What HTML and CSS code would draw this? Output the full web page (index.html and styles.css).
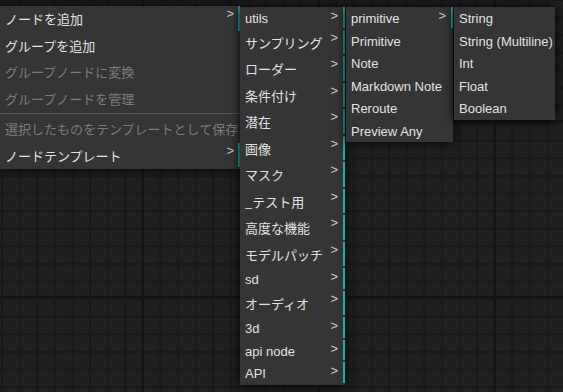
FILE: index.html
```html
<!DOCTYPE html>
<html lang="ja">
<head>
    <meta charset="UTF-8">
    <title>コンテキストメニュー</title>
    <link rel="stylesheet" href="styles.css">
</head>
<body>
    <div class="canvas">
        <div class="menus">
            <!-- メインメニュー -->
            <div class="menu menu-main">
                <div class="entry jp sub"><span>ノードを追加</span><span class="arrow">&gt;</span></div>
                <div class="entry jp">グループを追加</div>
                <div class="entry jp disabled">グループノードに変換</div>
                <div class="entry jp disabled">グループノードを管理</div>
                <div class="separator"></div>
                <div class="entry jp disabled">選択したものをテンプレートとして保存</div>
                <div class="entry jp sub"><span>ノードテンプレート</span><span class="arrow">&gt;</span></div>
            </div>

            <!-- カテゴリ -->
            <div class="menu menu-cat">
                <div class="entry sub"><span>utils</span><span class="arrow">&gt;</span></div>
                <div class="entry jp sub"><span>サンプリング</span><span class="arrow">&gt;</span></div>
                <div class="entry jp sub"><span>ローダー</span><span class="arrow">&gt;</span></div>
                <div class="entry jp sub"><span>条件付け</span><span class="arrow">&gt;</span></div>
                <div class="entry jp sub"><span>潜在</span><span class="arrow">&gt;</span></div>
                <div class="entry jp sub"><span>画像</span><span class="arrow">&gt;</span></div>
                <div class="entry jp sub"><span>マスク</span><span class="arrow">&gt;</span></div>
                <div class="entry jp sub"><span>_テスト用</span><span class="arrow">&gt;</span></div>
                <div class="entry jp sub"><span>高度な機能</span><span class="arrow">&gt;</span></div>
                <div class="entry jp sub"><span>モデルパッチ</span><span class="arrow">&gt;</span></div>
                <div class="entry sub"><span>sd</span><span class="arrow">&gt;</span></div>
                <div class="entry jp sub"><span>オーディオ</span><span class="arrow">&gt;</span></div>
                <div class="entry sub"><span>3d</span><span class="arrow">&gt;</span></div>
                <div class="entry sub"><span>api node</span><span class="arrow">&gt;</span></div>
                <div class="entry sub"><span>API</span><span class="arrow">&gt;</span></div>
            </div>

            <!-- utils -->
            <div class="menu menu-utils">
                <div class="entry sub"><span>primitive</span><span class="arrow">&gt;</span></div>
                <div class="entry">Primitive</div>
                <div class="entry">Note</div>
                <div class="entry">Markdown Note</div>
                <div class="entry">Reroute</div>
                <div class="entry">Preview Any</div>
            </div>

            <!-- primitive -->
            <div class="menu menu-prim">
                <div class="entry">String</div>
                <div class="entry">String (Multiline)</div>
                <div class="entry">Int</div>
                <div class="entry">Float</div>
                <div class="entry">Boolean</div>
            </div>
        </div>
    </div>
</body>
</html>
```

FILE: styles.css
```css
body {
    margin: 0;
    font-family: "Liberation Sans", "Noto Sans CJK JP", sans-serif;
    font-size: 13px;
    color: #e2e2e2;
}
.canvas {
    width: 563px;
    height: 392px;
    overflow: hidden;
    background-color: #202020;
    background-image:
        linear-gradient(90deg, #141414 2px, transparent 2px),
        linear-gradient(#141414 2px, transparent 2px),
        linear-gradient(90deg, #191919 2px, transparent 2px),
        linear-gradient(#191919 2px, transparent 2px);
    background-size: 176px 176px, 176px 176px, 17.6px 17.6px, 17.6px 17.6px;
    background-position: 142px 120px, 142px 120px, 1px -1px, 1px -1px;
}
.menus {
    display: flex;
    align-items: flex-start;
    gap: 1px;
    padding-top: 6px;
}
.menu {
    background-color: #353535;
    box-shadow: 0 0 10px #000;
}
.menu-main {
    width: 240px;
}
.menu-cat {
    width: 105px;
    margin-top: 1px;
    margin-left: -1px;
}
.menu-utils {
    width: 107px;
    margin-top: 1px;
}
.menu-prim {
    width: 101px;
    margin-top: 1px;
}
.entry {
    display: flex;
    justify-content: space-between;
    height: 18.5px;
    padding-top: 2px;
    line-height: 20.5px;
    margin-bottom: 2px;
    padding-left: 5px;
    white-space: nowrap;
}
.entry.jp {
    height: 23.5px;
    padding-top: 1px;
    line-height: 24.5px;
    font-family: "Noto Sans CJK JP", sans-serif;
}
.entry.sub {
    border-right: 2px solid #17b3a8;
    padding-right: 5px;
}
.menu-main .entry.sub {
    padding-right: 4px;
}
.arrow {
    font-family: "Liberation Sans", sans-serif;
    color: #ccc;
    line-height: 16px;
}
.entry.sub .arrow {
    margin-top: -1px;
}
.disabled {
    color: #7c7c7c;
}
.separator {
    height: 1px;
    background-color: #585858;
    margin: 3px 0 2px;
}
```
